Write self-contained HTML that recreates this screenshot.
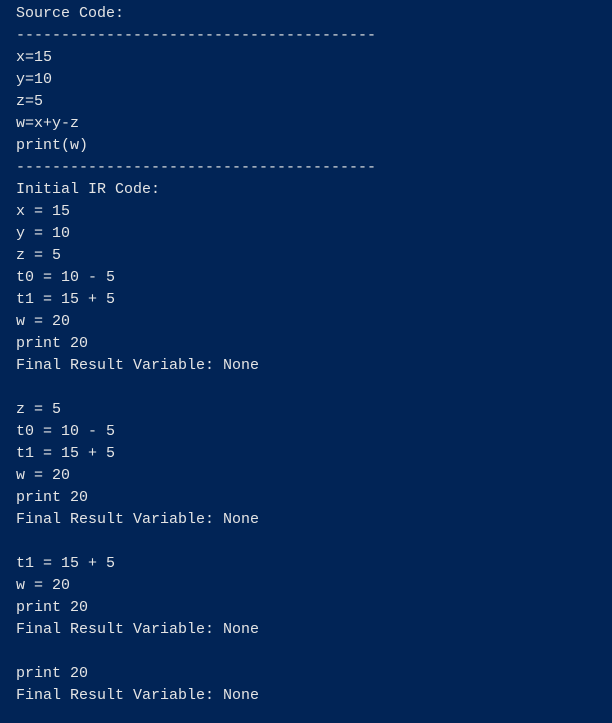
<!DOCTYPE html>
<html><head><meta charset="utf-8"><style>
html,body{margin:0;padding:0;background:#012456;width:612px;height:723px;overflow:hidden}
pre{margin:0;position:absolute;left:16px;top:3px;font-family:"Liberation Mono",monospace;font-size:15px;line-height:22px;color:#e4e4e4}
</style></head><body>
<pre>Source Code:
----------------------------------------
x=15
y=10
z=5
w=x+y-z
print(w)
----------------------------------------
Initial IR Code:
x = 15
y = 10
z = 5
t0 = 10 - 5
t1 = 15 + 5
w = 20
print 20
Final Result Variable: None

z = 5
t0 = 10 - 5
t1 = 15 + 5
w = 20
print 20
Final Result Variable: None

t1 = 15 + 5
w = 20
print 20
Final Result Variable: None

print 20
Final Result Variable: None
</pre>
</body></html>
